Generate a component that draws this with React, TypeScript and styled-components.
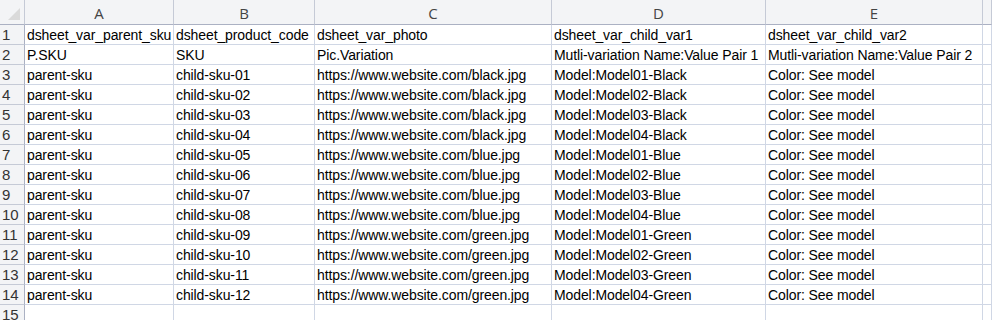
import styled, { createGlobalStyle } from "styled-components";

const GlobalStyle = createGlobalStyle`
  html, body {
    margin: 0;
    padding: 0;
    background: #ffffff;
  }
`;

const columns = ["A", "B", "C", "D", "E", ""];

const data: string[][] = [
  ["dsheet_var_parent_sku", "dsheet_product_code", "dsheet_var_photo", "dsheet_var_child_var1", "dsheet_var_child_var2"],
  ["P.SKU", "SKU", "Pic.Variation", "Mutli-variation Name:Value Pair 1", "Mutli-variation Name:Value Pair 2"],
];

const colors = ["black", "blue", "green"];
const colorNames = ["Black", "Blue", "Green"];
for (let i = 0; i < 12; i++) {
  const c = Math.floor(i / 4);
  const m = (i % 4) + 1;
  const n = String(i + 1).padStart(2, "0");
  data.push([
    "parent-sku",
    `child-sku-${n}`,
    `https://www.website.com/${colors[c]}.jpg`,
    `Model:Model0${m}-${colorNames[c]}`,
    "Color: See model",
  ]);
}
data.push(["", "", "", "", ""]);

function App(): JSX.Element {
  return (
    <>
      <GlobalStyle />
      <Sheet>
        <Corner>
          <CornerMark />
        </Corner>
        {columns.map((c, i) => (
          <ColHead key={c + i}>{c}</ColHead>
        ))}
        {data.map((row, r) => (
          <Row key={r}>
            <RowHead>{r + 1}</RowHead>
            {row.map((v, ci) => (
              <Cell key={ci}>{v}</Cell>
            ))}
            <Cell />
          </Row>
        ))}
      </Sheet>
    </>
  );
}

const Sheet = styled.div`
display: grid;
grid-template-columns: 25px 149px 141px 237px 214px 217px 1fr;
grid-auto-rows: 20px;
grid-template-rows: 25px;
width: 992px;
height: 320px;
overflow: hidden;
font-family: "Liberation Sans", Arial, sans-serif;
`
const Row = styled.div`
display: contents;
`
const Corner = styled.div`
position: relative;
background: #f3f4f6;
border-right: 1px solid #c5cad6;
border-bottom: 1px solid #abb1c3;
`
const CornerMark = styled.div`
position: absolute;
right: 4px;
bottom: 4px;
width: 0;
height: 0;
border-left: 12px solid transparent;
border-bottom: 12px solid #dadada;
`
const ColHead = styled.div`
background: #f3f4f6;
border-right: 1px solid #c5cad6;
border-bottom: 1px solid #abb1c3;
display: flex;
align-items: center;
justify-content: center;
font-family: "Open Sans", "Liberation Sans", sans-serif;
font-size: 15px;
color: #444444;
padding-top: 1px;
`
const RowHead = styled.div`
background: #f3f4f6;
border-right: 1px solid #abb1c3;
border-bottom: 1px solid #c5cad6;
font-size: 15px;
color: #333333;
padding-left: 2px;
line-height: 20px;
`
const Cell = styled.div`
border-right: 1px solid #d0d7e5;
border-bottom: 1px solid #d0d7e5;
font-size: 14px;
letter-spacing: -0.1px;
color: #000000;
padding-left: 2px;
line-height: 20px;
white-space: nowrap;
`

export default App;
